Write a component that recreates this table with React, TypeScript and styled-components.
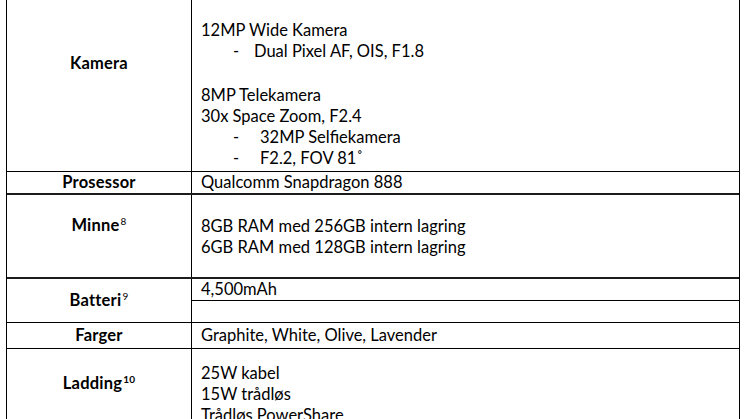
import React from "react";
import styled, { createGlobalStyle } from "styled-components";

const GlobalStyle = createGlobalStyle`
  html, body {
    margin: 0;
    padding: 0;
    background: #ffffff;
  }
  body {
    font-family: Lato, "Open Sans", "Liberation Sans", sans-serif;
    color: #000;
    overflow: hidden;
  }
  * { box-sizing: border-box; }
`;

const Table = styled.div`
  margin-left: 6px;
  width: 734px;
  border-left: 1px solid #000;
  border-right: 1px solid #000;
  font-size: 16.5px;
  line-height: 21px;
`;

const Row = styled.div<{ $thick?: boolean }>`
  display: grid;
  grid-template-columns: 185px 1fr;
  border-bottom: ${(p) => (p.$thick ? "2px solid #1c1c1c" : "1px solid #000")};
`;

const Label = styled.div<{ $top?: number }>`
  border-right: 1px solid #000;
  font-weight: 700;
  letter-spacing: 0.2px;
  text-align: center;
  display: flex;
  justify-content: center;
  align-items: ${(p) => (p.$top === undefined ? "center" : "flex-start")};
  padding-top: ${(p) => p.$top ?? 0}px;
`;

const Value = styled.div<{ $pt?: number; $pb?: number }>`
  padding: ${(p) => p.$pt ?? 0}px 0 ${(p) => p.$pb ?? 0}px 9px;
`;

const SplitValue = styled.div`
  display: flex;
  flex-direction: column;
`;

const SubCell = styled.div<{ $divider?: boolean }>`
  height: ${(p) => (p.$divider ? 22 : 21)}px;
  padding-left: 9px;
  border-bottom: ${(p) => (p.$divider ? "1px solid #000" : "none")};
`;

const Line = styled.div<{ $gap?: number }>`
  height: 21px;
  white-space: nowrap;
  margin-top: ${(p) => p.$gap ?? 0}px;
`;

const Bullet = styled.div<{ $indent: number }>`
  height: 21px;
  display: flex;
  white-space: nowrap;
  padding-left: 32px;
  & > span:first-child {
    width: ${(p) => p.$indent - 32}px;
  }
`;

const Sup = styled.sup`
  font-size: 10px;
  line-height: 0;
  vertical-align: 6px;
  font-weight: 400;
  margin-left: 1px;
`;

const SupBold = styled(Sup)`
  font-weight: 700;
`;

export default function App() {
  return (
    <>
      <GlobalStyle />
      <Table>
        <Row>
          <Label $top={53}>Kamera</Label>
          <Value $pt={20} $pb={2}>
            <Line>12MP Wide Kamera</Line>
            <Bullet $indent={53}>
              <span>-</span>
              <span>Dual Pixel AF, OIS, F1.8</span>
            </Bullet>
            <Line $gap={23}>8MP Telekamera</Line>
            <Line>30x Space Zoom, F2.4</Line>
            <Bullet $indent={59}>
              <span>-</span>
              <span>32MP Selfiekamera</span>
            </Bullet>
            <Bullet $indent={59}>
              <span>-</span>
              <span>F2.2, FOV 81˚</span>
            </Bullet>
          </Value>
        </Row>
        <Row $thick>
          <Label>Prosessor</Label>
          <Value>
            <Line>Qualcomm Snapdragon 888</Line>
          </Value>
        </Row>
        <Row $thick>
          <Label $top={20}>
            <span>
              Minne<Sup>8</Sup>
            </span>
          </Label>
          <Value $pt={21} $pb={19}>
            <Line>8GB RAM med 256GB intern lagring</Line>
            <Line>6GB RAM med 128GB intern lagring</Line>
          </Value>
        </Row>
        <Row>
          <Label>
            <span>
              Batteri<Sup>9</Sup>
            </span>
          </Label>
          <SplitValue>
            <SubCell $divider>4,500mAh</SubCell>
            <SubCell />
          </SplitValue>
        </Row>
        <Row>
          <Label>Farger</Label>
          <Value $pt={2} $pb={2}>
            <Line>Graphite, White, Olive, Lavender</Line>
          </Value>
        </Row>
        <Row>
          <Label $top={24}>
            <span>
              Ladding<SupBold>10</SupBold>
            </span>
          </Label>
          <Value $pt={14} $pb={13}>
            <Line>25W kabel</Line>
            <Line>15W trådløs</Line>
            <Line>Trådløs PowerShare</Line>
          </Value>
        </Row>
      </Table>
    </>
  );
}
